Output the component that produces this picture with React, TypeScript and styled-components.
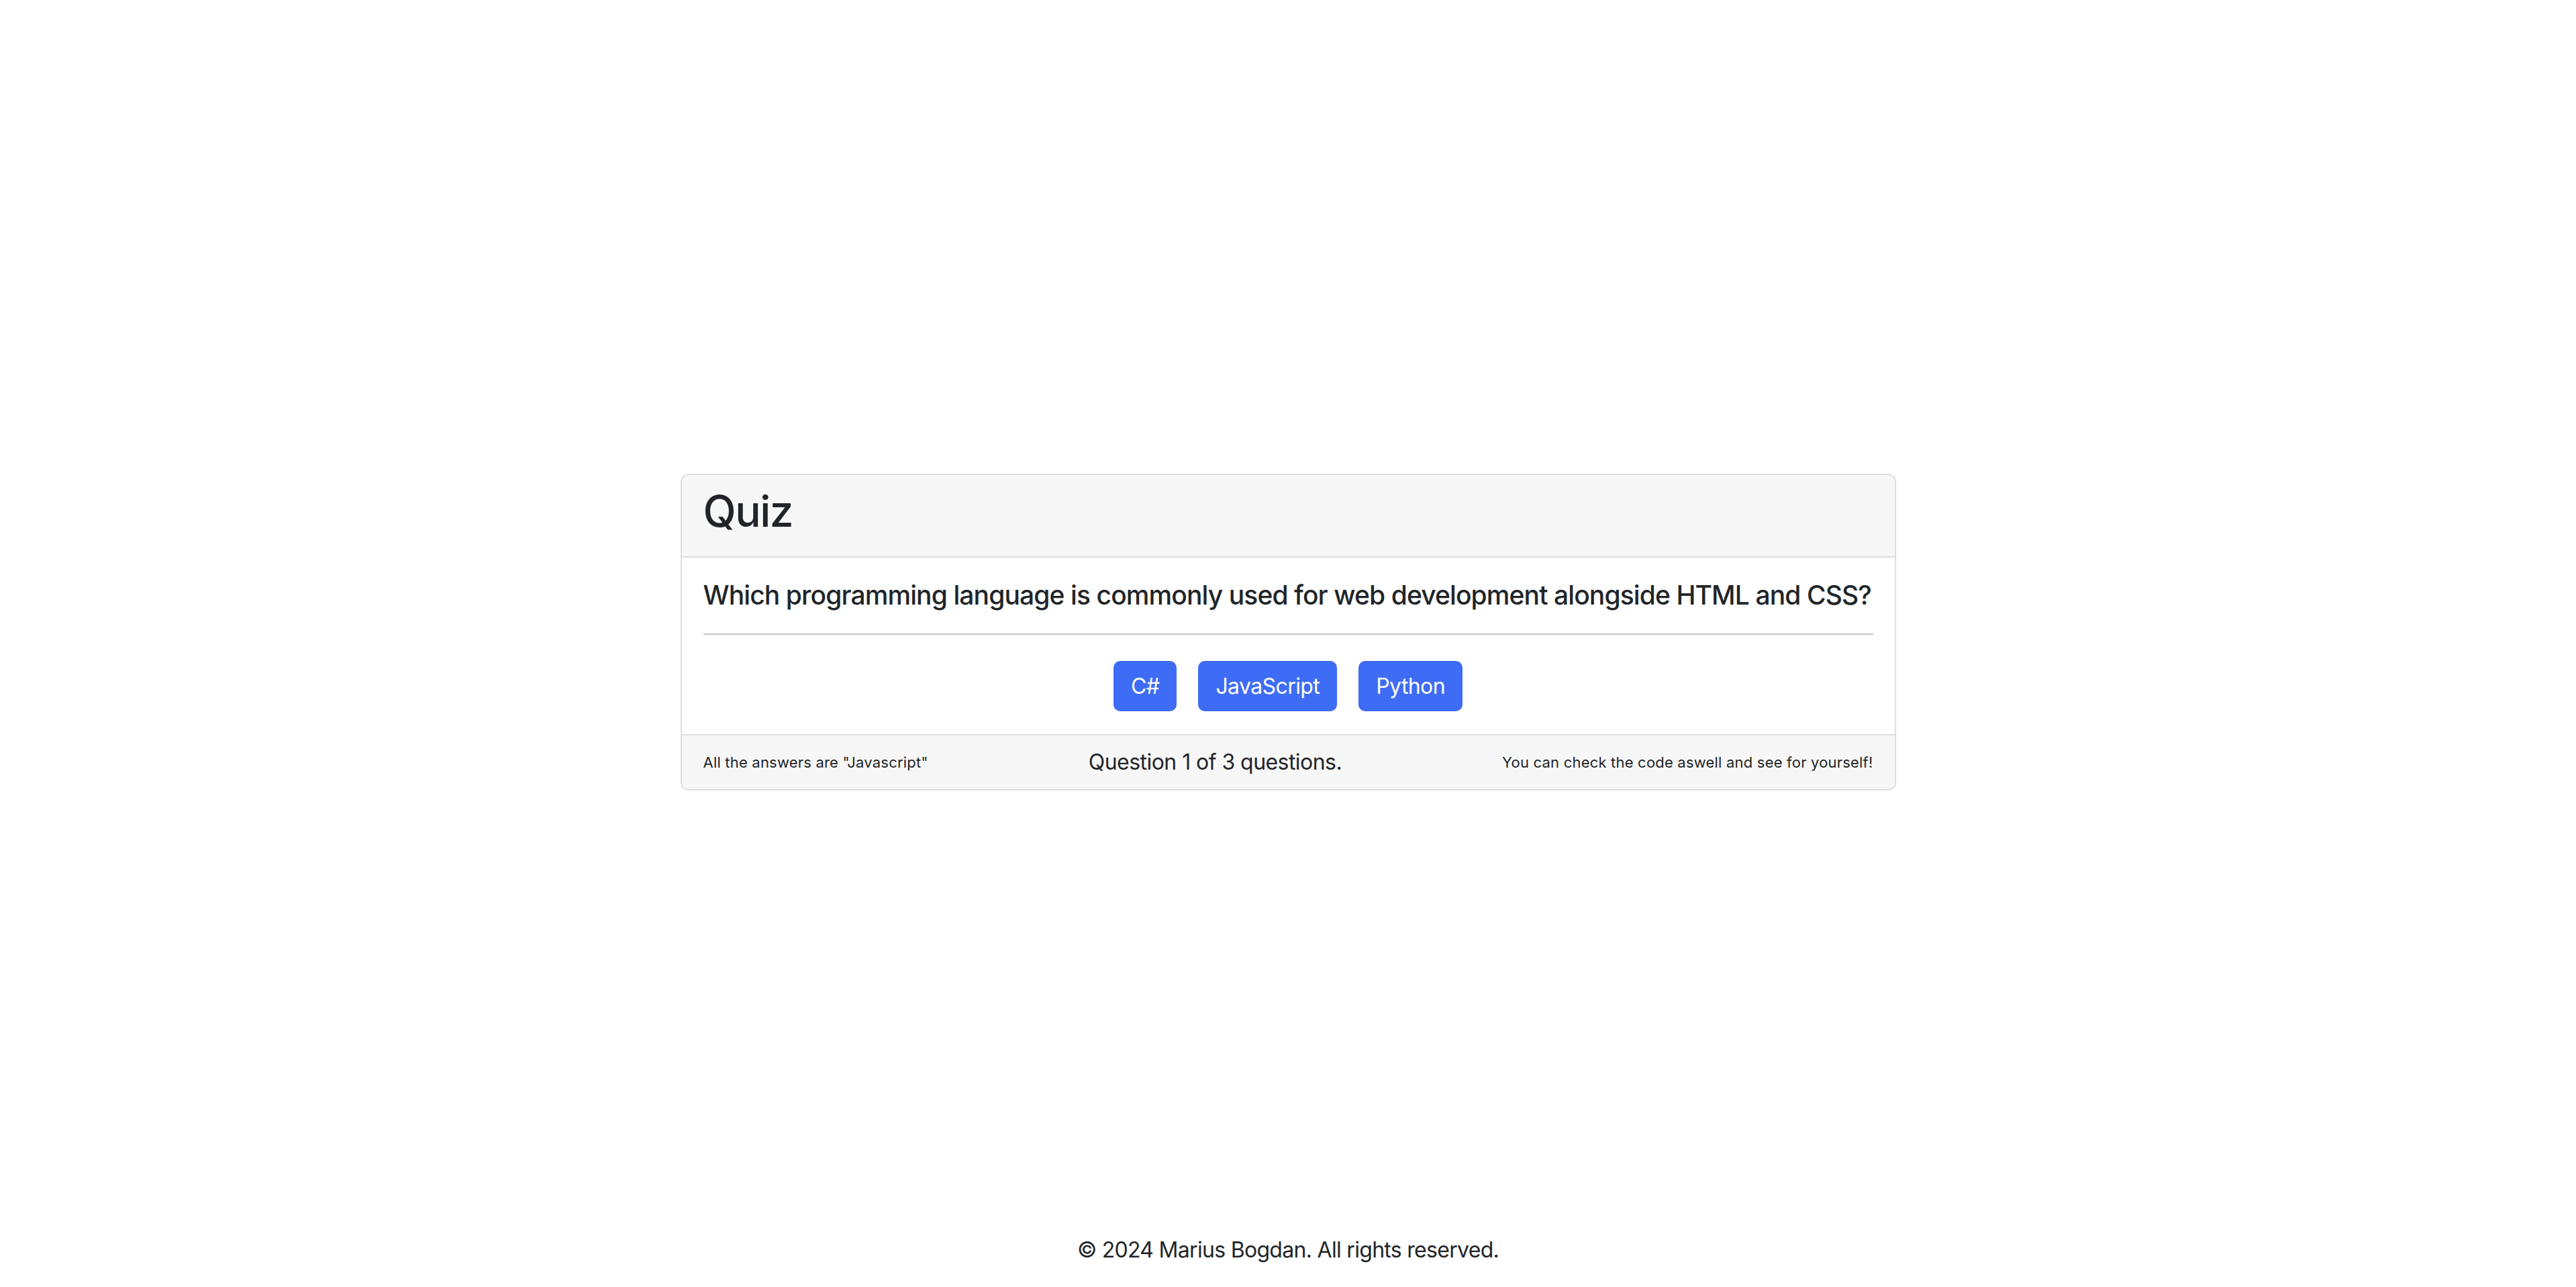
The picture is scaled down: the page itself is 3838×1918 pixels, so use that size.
import React from "react";
import styled, { createGlobalStyle } from "styled-components";

const GlobalStyle = createGlobalStyle`
  html, body {
    margin: 0;
    padding: 0;
    background: #ffffff;
  }
  body {
    font-family: Inter, "Noto Sans", "Liberation Sans", sans-serif;
    color: #212529;
  }
  * {
    box-sizing: border-box;
  }
`;

const answers = ["C#", "JavaScript", "Python"];

const App: React.FC = () => {
  return (
    <>
      <GlobalStyle />
      <STPage>
        <STMain>
          <STCard>
            <STCardHeader>
              <STTitle>Quiz</STTitle>
            </STCardHeader>
            <STCardBody>
              <STQuestion>
                Which programming language is commonly used for web development
                alongside HTML and CSS?
              </STQuestion>
              <STDivider />
              <STAnswers>
                {answers.map((answer) => (
                  <STAnswerButton key={answer} type="button">
                    {answer}
                  </STAnswerButton>
                ))}
              </STAnswers>
            </STCardBody>
            <STCardFooter>
              <STNote>All the answers are "Javascript"</STNote>
              <STProgress>Question 1 of 3 questions.</STProgress>
              <STNote>You can check the code aswell and see for yourself!</STNote>
            </STCardFooter>
          </STCard>
        </STMain>
        <STFooter>© 2024 Marius Bogdan. All rights reserved.</STFooter>
      </STPage>
    </>
  );
};

export default App;

const STPage = styled.div`
  display: flex;
  flex-direction: column;
  min-height: 1918px;
`;

const STMain = styled.main`
  flex: 1;
  display: flex;
  align-items: center;
  justify-content: center;
  padding-top: 45px;
`;

const STCard = styled.div`
  width: 1811px;
  border: 2px solid #dedede;
  border-radius: 12px;
  overflow: hidden;
  background: #ffffff;
`;

const STCardHeader = styled.div`
  padding: 16px 32px 12px;
  background: #f7f7f7;
  border-bottom: 2px solid #dedede;
`;

const STTitle = styled.h2`
  margin: 0 0 16px;
  font-size: 64px;
  font-weight: 500;
  line-height: 1.2;
  letter-spacing: -1.5px;
`;

const STCardBody = styled.div`
  padding: 32px 32px 34px;
`;

const STQuestion = styled.h5`
  margin: 0;
  font-size: 39px;
  font-weight: 500;
  line-height: 48px;
  white-space: nowrap;
  letter-spacing: -0.9px;
`;

const STDivider = styled.hr`
  margin: 33px 0 0;
  border: 0;
  border-top: 2px solid #c9c9c9;
`;

const STAnswers = styled.div`
  display: flex;
  justify-content: center;
  margin-top: 39px;
`;

const STAnswerButton = styled.button`
  margin: 0 16px;
  padding: 12px 24px;
  border: 2px solid #3f6cf4;
  border-radius: 10px;
  background: #3f6cf4;
  color: #ffffff;
  font-family: Inter, "Noto Sans", "Liberation Sans", sans-serif;
  font-size: 32px;
  line-height: 47px;
  letter-spacing: -0.6px;
  cursor: pointer;
`;

const STCardFooter = styled.div`
  display: flex;
  align-items: center;
  justify-content: space-between;
  padding: 16px 32px;
  background: #f7f7f7;
  border-top: 2px solid #dedede;
`;

const STNote = styled.span`
  font-size: 22px;
  line-height: 48px;
  letter-spacing: 0.2px;
`;

const STProgress = styled.span`
  font-size: 32px;
  line-height: 48px;
  letter-spacing: -0.55px;
`;

const STFooter = styled.footer`
  padding-bottom: 31px;
  text-align: center;
  font-size: 32px;
  line-height: 48px;
  letter-spacing: -0.7px;
`;
